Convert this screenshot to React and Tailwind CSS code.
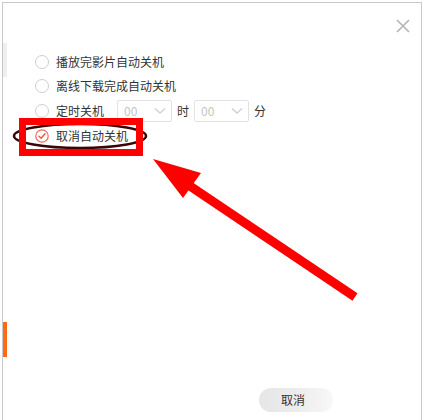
import React from 'react';

const font = { fontFamily: '"Noto Sans CJK SC", "Noto Sans", sans-serif' };

function Radio({ checked }) {
  if (checked) {
    return (
      <svg width="14" height="14" viewBox="0 0 14 14" className="shrink-0">
        <circle cx="7" cy="7" r="6.2" fill="#fff" stroke="#ee6a5a" strokeWidth="1.2" />
        <path d="M4 7.2 L6.2 9.2 L10 4.8" fill="none" stroke="#ee5a4a" strokeWidth="1.5" strokeLinecap="round" strokeLinejoin="round" />
      </svg>
    );
  }
  return <span className="w-[14px] h-[14px] shrink-0 rounded-full border border-[#cfcfcf] bg-white" />;
}

function Select() {
  return (
    <div className="w-[55px] h-[22px] border border-[#e2e2e2] rounded-[2px] flex items-center justify-between pl-[6px] pr-[5px]">
      <span className="text-[12px] text-[#c4c4c4]">00</span>
      <svg width="12" height="8" viewBox="0 0 12 8">
        <path d="M1 1.5 L6 6 L11 1.5" fill="none" stroke="#d0d0d0" strokeWidth="1.4" />
      </svg>
    </div>
  );
}

function Option({ checked, children, tall }) {
  return (
    <div className={`flex items-center gap-[7px] ${tall ? 'h-[24px]' : 'h-[22px]'}`}>
      <Radio checked={checked} />
      {children}
    </div>
  );
}

export default function App() {
  return (
    <div className="w-[428px] h-[420px] bg-white relative overflow-hidden pt-[2px] pl-[2px]" style={font}>
      <div className="w-[420px] h-[418px] border border-b-0 border-[#c9c9c9] flex text-[#333] text-[12px]">
        <div className="w-[4px] flex flex-col">
          <div className="h-[40px]" />
          <div className="h-[34px] bg-[#efefef]" />
          <div className="h-[245px]" />
          <div className="h-[35px] bg-[#ff6a17]" />
        </div>
        <div className="flex-1 flex flex-col">
          <div className="h-[48px] flex justify-end items-start pt-[16px] pr-[11px]">
            <svg width="14" height="14" viewBox="0 0 14 14">
              <path d="M1 1 L13 13 M13 1 L1 13" stroke="#b4b4b4" strokeWidth="1.6" />
            </svg>
          </div>
          <div className="flex flex-col gap-[2px] pl-[28px]">
            <Option>播放完影片自动关机</Option>
            <Option>离线下载完成自动关机</Option>
            <Option tall>
              <span className="mr-[6px]">定时关机</span>
              <Select />
              <span className="mx-[-2px]">时</span>
              <Select />
              <span className="ml-[-2px]">分</span>
            </Option>
            <Option checked>取消自动关机</Option>
          </div>
          <div className="mt-auto flex justify-end pr-[88px] pb-[8px]">
            <div className="w-[74px] h-[24px] rounded-full bg-gradient-to-r from-[#e6e6e6] via-[#ececec] to-[#f8f8f8] flex items-center pl-[22px] text-[12px] text-[#333]">
              取消
            </div>
          </div>
        </div>
      </div>

      {/* annotations */}
      <svg className="absolute left-0 top-0 pointer-events-none" width="428" height="420">
        <ellipse cx="80" cy="136" rx="66" ry="12" fill="none" stroke="#3a0505" strokeWidth="2.5" />
        <line x1="355" y1="297" x2="178" y2="178" stroke="#ff0000" strokeWidth="9" />
        <polygon points="153,159 201,173 183,198" fill="#ff0000" />
      </svg>
      <div className="absolute left-[19px] top-[118px] w-[124px] h-[38px] border-[7px] border-[#ff0000]" />
    </div>
  );
}
